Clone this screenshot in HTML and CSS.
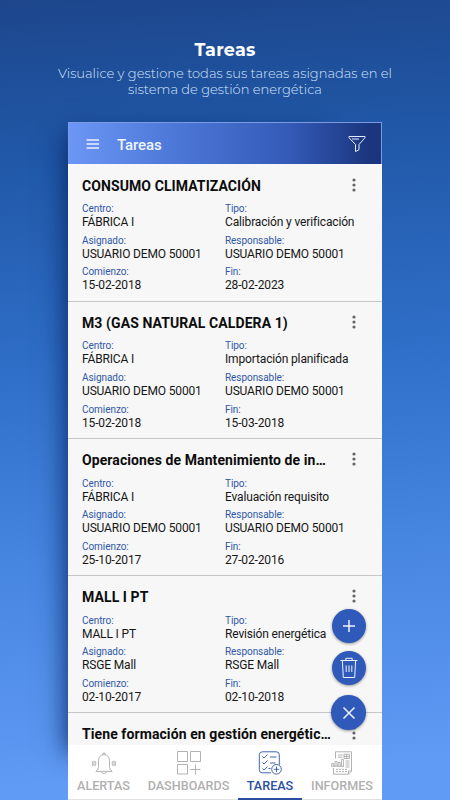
FILE: index.html
```
<!DOCTYPE html>
<html lang="es">
<head>
    <meta charset="UTF-8">
    <meta name="viewport" content="width=device-width, initial-scale=1.0">
    <title>Tareas</title>
    <link rel="stylesheet" href="styles.css">
</head>
<body>
    <header class="intro">
        <h1>Tareas</h1>
        <p>Visualice y gestione todas sus tareas asignadas en el<br>sistema de gestión energética</p>
    </header>

    <div class="phone">
        <div class="toolbar">
            <svg class="menu" width="14" height="10" viewBox="0 0 14 10">
                <path d="M0.5 1h12.5M0.5 5h12.5M0.5 9h12.5" stroke="#e8f1ff" stroke-width="1.4"/>
            </svg>
            <h2>Tareas</h2>
            <svg class="filtro" width="18" height="18" viewBox="0 0 18 18" fill="none" stroke="#e4edff" stroke-width="1">
                <path d="M1 1.5h16v1.2L11 9.5v5.2l-3.5 1.9V9.5L1 2.7z"/>
                <path d="M4 4h7"/>
            </svg>
        </div>

        <div class="lista" id="lista">
            <!-- Aquí se agregan las tareas -->
        </div>

        <nav class="tabs">
            <a class="tab alertas">
                <svg width="24" height="24" viewBox="0 0 24 24">
                    <path d="M3.8 20.4h16.4c-1.8-1.3-2.7-3-2.7-5V9.3c0-3-2-5.4-5.5-5.8-3.5.4-5.5 2.8-5.5 5.8v6.1c0 2-.9 3.7-2.7 5z"/>
                    <path d="M10.5 3.5a1.5 1.5 0 0 1 3 0M9.4 20.6c.2 2.6 5 2.6 5.2 0"/>
                    <ellipse cx="2.8" cy="12.5" rx="1" ry="2.2"/>
                    <ellipse cx="21.2" cy="12.5" rx="1" ry="2.2"/>
                    <path d="M1 9.8q-1.2 2.7 0 5.4M23 9.8q1.2 2.7 0 5.4"/>
                </svg>
                <span>ALERTAS</span>
            </a>
            <a class="tab dashboards">
                <svg width="24" height="24" viewBox="0 0 24 24">
                    <path d="M.5.5h10v10H.5zM13.5.5h10v10h-10zM.5 13.5h10v9.5H.5zM13.2 18.5H23.5M18.5 13.5V23.5"/>
                </svg>
                <span>DASHBOARDS</span>
            </a>
            <a class="tab tareas activa">
                <svg width="24" height="24" viewBox="0 0 24 24">
                    <path d="M13 21.8H4.3a3 3 0 0 1-3-3v-15a3 3 0 0 1 3-3h14a3 3 0 0 1 3 3v10"/>
                    <path d="M4.5 5.5l1.6 1.6 3.4-3.6M4.5 11.5l1.6 1.6 3.4-3.6M4.5 17.5l1.6 1.6 3.4-3.6M12 6h6.5M12 12h5.5M10.5 17.5h2"/>
                    <circle cx="18.5" cy="18.3" r="4.8"/>
                    <path d="M15.8 18.3h5.4M18.5 15.6V21"/>
                </svg>
                <span>TAREAS</span>
            </a>
            <a class="tab informes">
                <svg width="24" height="24" viewBox="0 0 24 24">
                    <path d="M5.5 7.5V.8h16v19.4l-3 3H3.5V17"/>
                    <path d="M18.5 23v-3h3M8 4h4.5M8 6.2h4.5M14 3.2h5.3v4.3H14zM16.6 3.2v4.3M14 5.4h5.3M15.5 10h4M15.5 12h4M15.5 14h4M15.5 16h4"/>
                    <path d="M1 15.3h13M1.8 15V12.5h2V15M5 15V10.5h2V15M8.2 15v-3.5h2V15M11.4 15V8.5h2V15"/>
                    <path d="M6 18.3h11M6 20.6h11" stroke-dasharray="2 1"/>
                </svg>
                <span>INFORMES</span>
            </a>
        </nav>

        <div class="acciones">
            <button class="fab">
                <svg width="14" height="14" viewBox="0 0 14 14"><path d="M7 1v12M1 7h12" stroke-width="1.5"/></svg>
            </button>
            <button class="fab">
                <svg width="20" height="22" viewBox="0 0 20 22">
                    <path d="M1.5 3.5h17M6.8 3.2V1.3h6.4v1.9M3.4 4l.9 16.5h11.4L16.6 4M7.2 8.5v6.5M10 8.5v6.5M12.8 8.5v6.5"/>
                </svg>
            </button>
            <button class="fab cerrar">
                <svg width="14" height="14" viewBox="0 0 14 14"><path d="M1.5 1.5l11 11M12.5 1.5l-11 11" stroke-width="1.5"/></svg>
            </button>
        </div>
    </div>

    <script>
        const tareas = [
            { titulo: 'CONSUMO CLIMATIZACIÓN', centro: 'FÁBRICA I', tipo: 'Calibración y verificación', asignado: 'USUARIO DEMO 50001', comienzo: '15-02-2018', fin: '28-02-2023' },
            { titulo: 'M3 (GAS NATURAL CALDERA 1)', centro: 'FÁBRICA I', tipo: 'Importación planificada', asignado: 'USUARIO DEMO 50001', comienzo: '15-02-2018', fin: '15-03-2018' },
            { titulo: 'Operaciones de Mantenimiento de in…', centro: 'FÁBRICA I', tipo: 'Evaluación requisito', asignado: 'USUARIO DEMO 50001', comienzo: '25-10-2017', fin: '27-02-2016' },
            { titulo: 'MALL I PT', centro: 'MALL I PT', tipo: 'Revisión energética', asignado: 'RSGE Mall', comienzo: '02-10-2017', fin: '02-10-2018' },
            { titulo: 'Tiene formación en gestión energétic…' }
        ];

        const lista = document.getElementById('lista');

        function campo(nombre, valor) {
            return `<div><dt>${nombre}:</dt><dd>${valor}</dd></div>`;
        }

        tareas.forEach(tarea => {
            const item = document.createElement('article');
            item.className = 'tarea';
            item.innerHTML = `
                <div class="cabecera">
                    <h3>${tarea.titulo}</h3>
                    <svg width="6" height="16" viewBox="0 0 6 16" fill="#666"><circle cx="3" cy="3" r="1.6"/><circle cx="3" cy="8" r="1.6"/><circle cx="3" cy="13" r="1.6"/></svg>
                </div>`;
            if (tarea.centro) {
                item.innerHTML += `
                <dl>
                    ${campo('Centro', tarea.centro)}
                    ${campo('Tipo', tarea.tipo)}
                    ${campo('Asignado', tarea.asignado)}
                    ${campo('Responsable', tarea.asignado)}
                    ${campo('Comienzo', tarea.comienzo)}
                    ${campo('Fin', tarea.fin)}
                </dl>`;
            }
            lista.appendChild(item);
        });
    </script>
</body>
</html>
```
FILE: styles.css
```
* {
    box-sizing: border-box;
}

body {
    margin: 0;
    height: 800px;
    overflow: hidden;
    display: flex;
    flex-direction: column;
    align-items: center;
    font-family: Roboto, "Liberation Sans", sans-serif;
    background: linear-gradient(176deg, #1d468c 0%, #2057a6 18%, #2e6dc6 43%, #4685e0 68%, #609bf5 95%);
}

h1, h2, h3, p, dl, dd {
    margin: 0;
}

.intro {
    height: 122px;
    padding-top: 39px;
    text-align: center;
    color: #fff;
    font-family: Montserrat, Inter, sans-serif;
}

.intro h1 {
    font-size: 17.5px;
    line-height: 22px;
    letter-spacing: 0.3px;
}

.intro p {
    margin-top: 4px;
    font-size: 13px;
    line-height: 16px;
    font-weight: 300;
    color: #d5e4fb;
}

.phone {
    position: relative;
    width: 314px;
    height: 678px;
    display: flex;
    flex-direction: column;
    background: #f7f7f7;
    box-shadow: -33px -18px 24px -30px rgba(7, 35, 95, 0.85);
}

.toolbar {
    height: 42px;
    flex: none;
    display: flex;
    align-items: center;
    padding: 1px 15px 0 17px;
    border: 1px solid #7d9be0;
    border-bottom: none;
    background: linear-gradient(90deg, #6b96f6 0%, #4a74d4 38%, #345bb8 70%, #1b367f 96%);
}

.toolbar h2 {
    flex: 1;
    margin-left: 17px;
    padding-top: 1px;
    font-size: 15px;
    font-weight: 500;
    letter-spacing: -0.1px;
    color: #eef5ff;
}

.lista {
    flex: 1;
    overflow: hidden;
    padding-top: 0.6px;
}

.tarea {
    height: 137.2px;
    padding: 12px 14px 0;
    border-bottom: 1px solid #c6c6c8;
}

.cabecera {
    display: flex;
    justify-content: space-between;
    padding-right: 11px;
}

.cabecera h3 {
    font-size: 14px;
    line-height: 19px;
    font-weight: 700;
    letter-spacing: 0.09px;
    color: #0c0c0c;
    white-space: nowrap;
}

dl {
    display: grid;
    grid-template-columns: 143px 1fr;
    grid-auto-rows: 31.6px;
    margin-top: 6.6px;
}

dt {
    font-size: 10px;
    line-height: 13px;
    letter-spacing: -0.06px;
    color: #2f57a5;
}

dd {
    font-size: 12px;
    line-height: 14px;
    letter-spacing: -0.15px;
    color: #161616;
    white-space: nowrap;
}

.tabs {
    height: 55px;
    flex: none;
    display: flex;
    background: #fff;
    border-bottom: 1px solid #e2e2e2;
}

.tab {
    display: flex;
    flex-direction: column;
    align-items: center;
    padding-top: 6px;
    font-size: 12.6px;
    font-weight: 500;
    line-height: 20px;
    color: #b0b0b0;
}

.tab svg {
    fill: none;
    stroke: #a9a9a9;
    stroke-width: 0.9;
}

.tab span {
    margin-top: 1px;
}

.alertas {
    width: 71px;
}

.dashboards {
    width: 99px;
}

.tareas {
    width: 64px;
}

.informes {
    width: 80px;
}

.activa {
    height: 55px;
    color: #2a4ea0;
    border-bottom: 2px solid #2a4ea0;
}

.activa svg {
    stroke: #2f56a8;
}

.acciones {
    position: absolute;
    right: 16px;
    top: 487px;
    display: flex;
    flex-direction: column;
    align-items: center;
    gap: 8px;
}

.fab {
    width: 34px;
    height: 34px;
    padding: 0;
    display: flex;
    align-items: center;
    justify-content: center;
    border: none;
    border-radius: 50%;
    background: #2f5ab9;
    box-shadow: 0 1px 3px rgba(0, 0, 0, 0.4);
}

.fab svg {
    fill: none;
    stroke: #eef4ff;
}

.cerrar {
    width: 35px;
    height: 35px;
    margin-top: 2px;
}
```
